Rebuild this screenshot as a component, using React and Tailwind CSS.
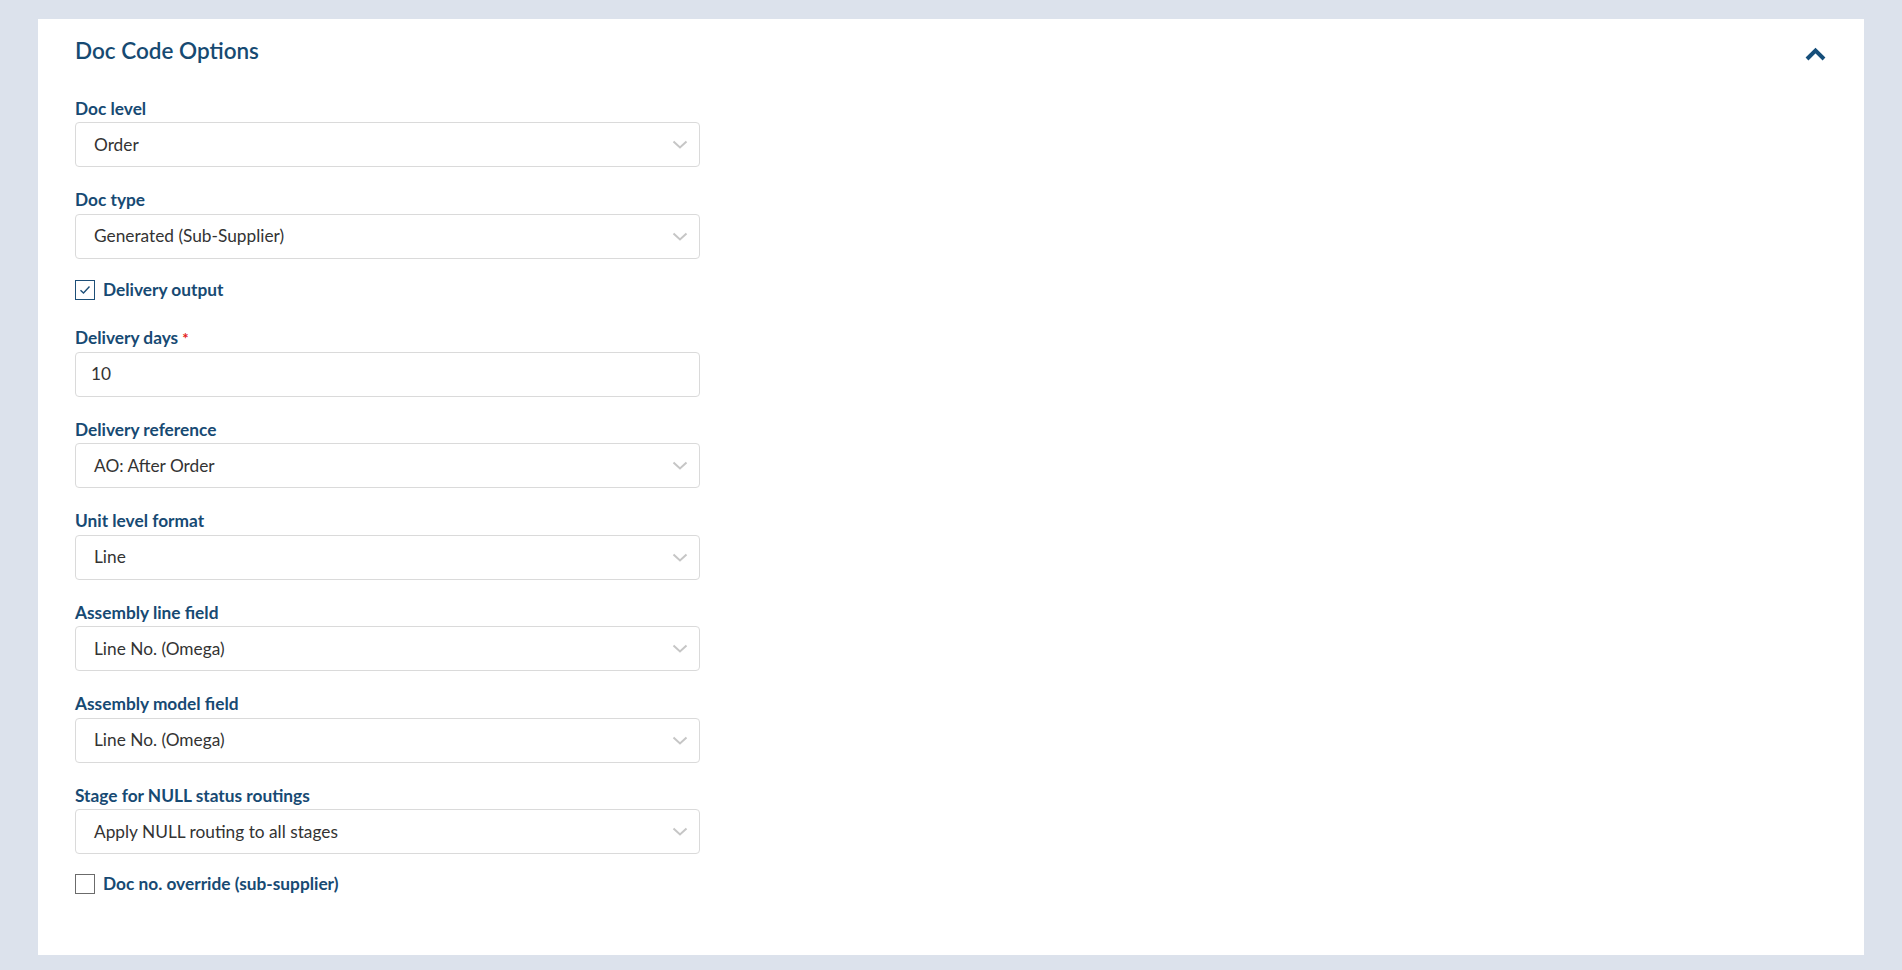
import React, { useState } from "react";

const labelColor = "text-[#174a73]";

const Chevron = () => (
    <svg width="16" height="9" viewBox="0 0 16 9" fill="none" className="shrink-0">
        <path d="M1.5 1.5 L8 7.5 L14.5 1.5" stroke="#c6c6c6" strokeWidth="2" />
    </svg>
);

const Label = ({ children, required }) => (
    <div className={`text-[17.3px] leading-[20px] font-bold ${labelColor} mb-[3.5px]`}>
        {children}
        {required && <span className="text-[#e4211b] ml-[4px] text-[15px] align-top">*</span>}
    </div>
);

const SelectField = ({ label, value }) => (
    <div className="mb-[23px]">
        <Label>{label}</Label>
        <div className="w-[625px] h-[45px] border border-[#dadada] rounded-[4px] bg-white flex items-center justify-between pl-[18px] pr-[11px] text-[17.3px] text-[#333333]">
            <span>{value}</span>
            <Chevron />
        </div>
    </div>
);

const CheckRow = ({ label, checked, onToggle, className }) => (
    <div className={`flex items-center h-[20px] cursor-pointer ${className}`} onClick={onToggle}>
        <div
            className={`w-[20px] h-[20px] border ${
                checked ? "border-[#1d4f78]" : "border-[#6b6b6b]"
            } bg-white flex items-center justify-center`}
        >
            {checked && (
                <svg width="12" height="10" viewBox="0 0 12 10" fill="none">
                    <path d="M1.5 5.2 L4.5 8 L10.5 1.5" stroke="#1d4f78" strokeWidth="1.4" />
                </svg>
            )}
        </div>
        <span className={`ml-[8px] text-[17.3px] leading-[20px] font-bold ${labelColor}`}>{label}</span>
    </div>
);

export default function App() {
    const [deliveryOutput, setDeliveryOutput] = useState(true);
    const [docOverride, setDocOverride] = useState(false);

    return (
        <div className="min-h-[970px] bg-[#dce2ec] pt-[19px] px-[38px] pb-[15px]" style={{ fontFamily: "Lato, 'Noto Sans', sans-serif" }}>
            <div className="bg-white h-[936px] pl-[37px] pr-[38px] pt-[17px]">
                <div className="flex items-start justify-between">
                    <h2 className="text-[22.5px] leading-[29px] font-semibold text-[#164a72]">Doc Code Options</h2>
                    <svg width="21" height="14" viewBox="0 0 21 14" fill="none" className="mt-[11px]">
                        <path d="M2 12 L10.5 3.5 L19 12" stroke="#164e7a" strokeWidth="4" />
                    </svg>
                </div>

                <div className="mt-[33.5px]">
                    <SelectField label="Doc level" value="Order" />
                    <SelectField label="Doc type" value="Generated (Sub-Supplier)" />

                    <CheckRow
                        label="Delivery output"
                        checked={deliveryOutput}
                        onToggle={() => setDeliveryOutput(!deliveryOutput)}
                        className="-mt-[2px] mb-[28.5px]"
                    />

                    <div className="mb-[23px]">
                        <Label required>Delivery days</Label>
                        <div className="w-[625px] h-[45px] border border-[#dadada] rounded-[4px] bg-white flex items-center pl-[15px] text-[17.3px] text-[#333333]">
                            10
                        </div>
                    </div>

                    <SelectField label="Delivery reference" value="AO: After Order" />
                    <SelectField label="Unit level format" value="Line" />
                    <SelectField label="Assembly line field" value="Line No. (Omega)" />
                    <SelectField label="Assembly model field" value="Line No. (Omega)" />
                    <SelectField label="Stage for NULL status routings" value="Apply NULL routing to all stages" />

                    <CheckRow
                        label="Doc no. override (sub-supplier)"
                        checked={docOverride}
                        onToggle={() => setDocOverride(!docOverride)}
                        className="-mt-[3px]"
                    />
                </div>
            </div>
        </div>
    );
}
